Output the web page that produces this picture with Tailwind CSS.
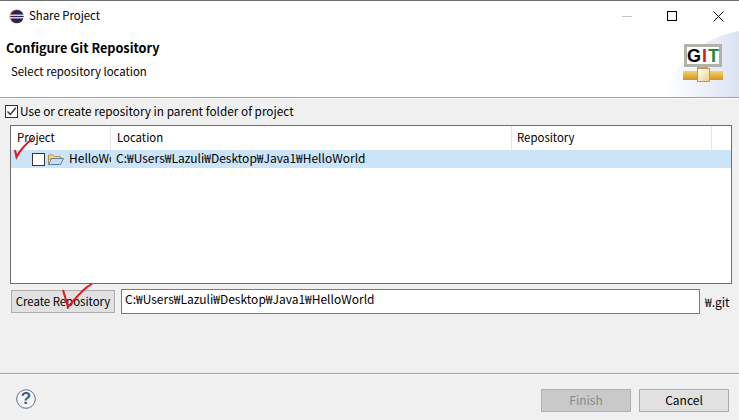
<!DOCTYPE html>
<html lang="en">
<head>
  <meta charset="UTF-8" />
  <title>Share Project</title>
  <script src="https://cdn.jsdelivr.net/npm/@tailwindcss/browser@4"></script>
</head>
<body class="w-[739px] h-[420px] overflow-hidden bg-[#f0f0f0] text-[12px] text-black font-['Noto_Sans_CJK_KR','Noto_Sans',sans-serif]">
<div class="relative w-[739px] h-[420px] flex flex-col border-t border-[#707070]">

  <!-- title bar -->
  <div class="h-[30px] shrink-0 bg-white flex items-center pl-[9px]">
    <svg width="15" height="15" viewBox="0 0 15 15"><circle cx="7.5" cy="7.5" r="7" fill="#e8862e"/><circle cx="8" cy="7.5" r="6.6" fill="#2c2255"/><rect x="1" y="5.6" width="14" height="1.2" fill="#fff"/><rect x="1" y="8.2" width="14" height="1.2" fill="#fff"/></svg>
    <span class="ml-[5px] mb-[2px] text-[11.4px] leading-[16px]">Share Project</span>
    <div class="ml-auto flex items-center">
      <div class="w-[10px] h-px bg-[#c4c4c4] mr-[35px]"></div>
      <div class="w-[10px] h-[10px] border border-black mr-[36px]"></div>
      <svg width="11" height="11" viewBox="0 0 11 11" class="mr-[15px]"><path d="M0.5 0.5L10.5 10.5M10.5 0.5L0.5 10.5" stroke="#111" stroke-width="1"/></svg>
    </div>
  </div>

  <!-- banner -->
  <div class="relative h-[67px] shrink-0 bg-white border-b border-[#a0a0a0] overflow-hidden">
    <div class="pl-[6px] pt-[9px] text-[12.7px] leading-[16px] font-bold">Configure Git Repository</div>
    <div class="pl-[11px] pt-[7px] text-[11.4px] leading-[16px]">Select repository location</div>
    <svg class="absolute right-0 top-0" width="74" height="66" viewBox="0 0 74 66"><defs><linearGradient id="g" x1="0" y1="0.6" x2="1" y2="0.6"><stop offset="0" stop-color="#fff"/><stop offset="1" stop-color="#dbe3f3"/></linearGradient></defs><path d="M0 66C4 40 30 8 74 0V66Z" fill="url(#g)"/></svg>
    <div class="absolute left-[684px] top-[13px] w-[38px] h-[23px] border-[3px] border-[#b3b3ab] bg-white flex items-center justify-center gap-[1px] font-['Liberation_Sans',sans-serif] font-bold text-[18px] leading-none">
      <span class="text-black">G</span><span class="text-[#d02020]">I</span><span class="text-[#1e8c2a]">T</span>
    </div>
    <div class="absolute left-[683px] top-[40px] w-[40px] h-[9px] bg-gradient-to-b from-[#f6d468] to-[#cf9420]"></div>
    <div class="absolute left-[697px] top-[36px] w-[11px] h-[4px] bg-[#d8a030]"></div>
    <div class="absolute left-[697px] top-[37px] w-[13px] h-[14px] border border-[#c49a3a] bg-gradient-to-br from-white to-[#f0cf80]"></div>
  </div>
  <div class="h-px shrink-0 bg-white"></div>

  <!-- content -->
  <div class="flex-1 flex flex-col">
    <label class="flex items-center h-[14px] mt-[5px] ml-[5px]">
      <span class="w-[13px] h-[13px] border border-[#333] bg-white flex items-center justify-center">
        <svg width="11" height="11" viewBox="0 0 11 11"><path d="M1.5 5.5L4.3 8.5L9.8 1.8" fill="none" stroke="#333" stroke-width="1.4"/></svg>
      </span>
      <span class="ml-[2px] text-[11.8px] leading-[16px]">Use or create repository in parent folder of project</span>
    </label>

    <!-- table -->
    <div class="mt-[7px] mx-[10px] h-[159px] w-[722px] border border-[#6e6e6e] bg-white">
      <div class="flex h-[24px] text-[11.4px] leading-[22px]">
        <div class="w-[100px] pl-[6px] border-r border-[#e5e5e5]">Project</div>
        <div class="w-[401px] pl-[6px] border-r border-[#e5e5e5]">Location</div>
        <div class="w-[200px] pl-[5px] border-r border-[#e5e5e5]">Repository</div>
      </div>
      <div class="flex items-center h-[18px] bg-[#cce4f7]">
        <div class="w-[100px] flex items-center pl-[21px] overflow-hidden shrink-0">
          <span class="w-[13px] h-[13px] border border-[#333] bg-white shrink-0"></span>
          <svg class="ml-[3px] shrink-0" width="16" height="13" viewBox="0 0 16 13"><path d="M0.5 11.5V2H5L6.5 3.5H12.5V6H0.5Z" fill="#f3d88e" stroke="#b8924c"/><path d="M0.5 11.5L3.5 5.5H15.5L12.5 11.5Z" fill="#c9dcf2" stroke="#5f7fa8"/></svg>
          <span class="ml-[5px] pb-[2px] whitespace-nowrap">HelloWorld</span>
        </div>
        <div class="pl-[5px] pb-[2px] whitespace-nowrap">C:₩Users₩Lazuli₩Desktop₩Java1₩HelloWorld</div>
      </div>
    </div>

    <!-- repository row -->
    <div class="flex items-center mt-[5px] ml-[11px]">
      <button class="w-[104px] h-[23px] pb-[2px] border border-[#adadad] bg-[#e1e1e1] text-[11.4px] leading-[16px]">Create Repository</button>
      <div class="ml-[6px] w-[579px] h-[25px] border border-[#7a7a7a] bg-white pl-[3px] leading-[18px]">C:₩Users₩Lazuli₩Desktop₩Java1₩HelloWorld</div>
      <span class="ml-[5px]">₩.git</span>
    </div>

    <!-- footer -->
    <div class="mt-auto border-t border-[#a0a0a0] h-[47px]">
      <div class="border-t border-white h-full flex items-start pt-[14px]">
        <svg class="ml-[16px]" width="20" height="20" viewBox="0 0 20 20"><circle cx="10" cy="10" r="9.3" fill="#f7f8fa" stroke="#5a6f92" stroke-width="1"/></svg>
        <span class="absolute left-[16px] top-[388px] w-[20px] text-center font-['Liberation_Sans',sans-serif] font-bold text-[17px] leading-[20px] text-[#46597d]">?</span>
        <button class="ml-auto w-[90px] h-[23px] pb-[2px] border border-[#b0b0b0] bg-[#c9c9c9] text-[#8a8a8a] text-[12px]">Finish</button>
        <button class="ml-[8px] mr-[10px] w-[90px] h-[23px] pb-[2px] border border-[#adadad] bg-[#e1e1e1] text-[12px]">Cancel</button>
      </div>
    </div>
  </div>

  <!-- red pen marks drawn on the screenshot -->
  <svg class="absolute left-0 top-[-1px] pointer-events-none" width="739" height="420" viewBox="0 0 739 420">
    <path d="M15 150L16.5 157C20 150 27 143 33 138" fill="none" stroke="#e8141c" stroke-width="2"/>
    <path d="M63 290C65 297 67 303 68 307C73 301 81 292 87 287L92 284" fill="none" stroke="#e8141c" stroke-width="2"/>
  </svg>
</div>
</body>
</html>
